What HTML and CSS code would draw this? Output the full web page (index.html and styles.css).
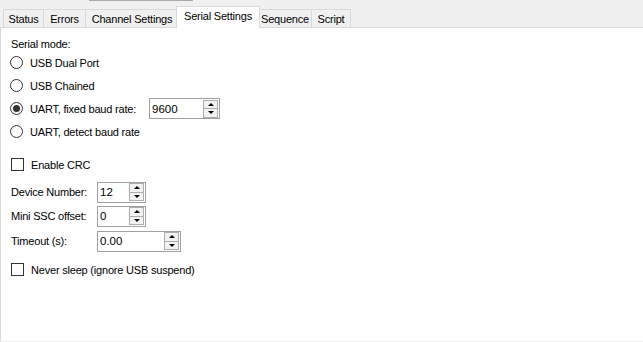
FILE: index.html
```html
<!DOCTYPE html>
<html>
<head>
<meta charset="utf-8">
<link rel="stylesheet" href="styles.css">
</head>
<body>
<div class="top"><div class="topline"></div></div>
<div class="tabs">
  <div class="tab t-status">Status</div>
  <div class="tab t-errors">Errors</div>
  <div class="tab t-channel">Channel Settings</div>
  <div class="tab sel t-serial">Serial Settings</div>
  <div class="tab t-seq">Sequence</div>
  <div class="tab t-script">Script</div>
</div>
<div class="panel">
  <div class="label-line">Serial mode:</div>
  <div class="row"><span class="radio"></span><span>USB Dual Port</span></div>
  <div class="row"><span class="radio"></span><span>USB Chained</span></div>
  <div class="row"><span class="radio on"></span><span class="uart-label">UART, fixed baud rate:</span>
    <div class="num w-baud"><span class="val">9600</span><span class="spin"><span class="btn up"></span><span class="btn down"></span></span></div>
  </div>
  <div class="row"><span class="radio"></span><span>UART, detect baud rate</span></div>

  <div class="row crc"><span class="check"></span><span>Enable CRC</span></div>

  <div class="frow first"><span class="flabel">Device Number:</span>
    <div class="num w-small"><span class="val">12</span><span class="spin"><span class="btn up"></span><span class="btn down"></span></span></div>
  </div>
  <div class="frow"><span class="flabel">Mini SSC offset:</span>
    <div class="num w-small"><span class="val">0</span><span class="spin"><span class="btn up"></span><span class="btn down"></span></span></div>
  </div>
  <div class="frow tmo"><span class="flabel">Timeout (s):</span>
    <div class="num w-wide"><span class="val">0.00</span><span class="spin"><span class="btn up"></span><span class="btn down"></span></span></div>
  </div>

  <div class="row sleep"><span class="check"></span><span>Never sleep (ignore USB suspend)</span></div>
</div>
</body>
</html>
```
FILE: styles.css
```css
html, body {
  margin: 0;
  padding: 0;
}
body {
  width: 643px;
  height: 342px;
  overflow: hidden;
  background: #f0f0f0;
  font-family: "Liberation Sans", Arial, sans-serif;
  font-size: 11px;
  letter-spacing: -0.2px;
  color: #000;
}
.top {
  height: 7px;
}
.topline {
  margin-left: 89px;
  width: 104px;
  height: 1px;
  background: #a9a9a9;
}
.tabs {
  display: flex;
  align-items: flex-end;
  height: 21px;
  padding-left: 3px;
  position: relative;
  z-index: 1;
  margin-bottom: -1px;
}
.tab {
  box-sizing: border-box;
  height: 18px;
  margin-bottom: 1px;
  border: 1px solid #d9d9d9;
  border-bottom: none;
  margin-right: -1px;
  background: #f0f0f0;
  display: flex;
  align-items: center;
  justify-content: center;
  padding-top: 1px;
}
.t-status { width: 41px; }
.t-errors { width: 43px; }
.t-channel { width: 94px; }
.t-serial { width: 84px; }
.t-seq { width: 54px; }
.t-script { width: 40px; }
.tab.sel {
  height: 22px;
  margin-bottom: 0;
  background: #fff;
  border-color: #d9d9d9;
  margin-left: -2px;
  margin-right: -2px;
  padding-top: 0;
  padding-bottom: 3px;
  position: relative;
  z-index: 2;
}
.panel {
  box-sizing: border-box;
  height: 314px;
  background: #fff;
  border-top: 1px solid #d9d9d9;
  border-left: 1px solid #d9d9d9;
  padding: 10px 0 0 9px;
}
.label-line {
  height: 13px;
  line-height: 13px;
  padding-left: 1px;
}
.row {
  height: 23px;
  display: flex;
  align-items: center;
}
.radio {
  box-sizing: border-box;
  width: 13px;
  height: 13px;
  border: 1px solid #333;
  border-radius: 50%;
  margin-right: 7px;
  display: flex;
  align-items: center;
  justify-content: center;
  flex: none;
}
.radio.on::after {
  content: "";
  width: 7px;
  height: 7px;
  border-radius: 50%;
  background: #333;
}
.check {
  box-sizing: border-box;
  width: 13px;
  height: 13px;
  border: 1px solid #333;
  margin-left: 1px;
  margin-right: 7px;
  flex: none;
}
.uart-label {
  width: 119px;
}
.num {
  box-sizing: border-box;
  height: 21px;
  border: 1px solid #a0a0a0;
  background: #fff;
  display: flex;
  align-items: center;
  justify-content: space-between;
  padding: 1px 1px 1px 2px;
}
.w-baud { width: 71px; }
.w-small { width: 49px; }
.w-wide { width: 84px; }
.val {
  font-size: 11.5px;
  letter-spacing: 0;
}
.spin {
  width: 15px;
  height: 18px;
  display: flex;
  flex-direction: column;
}
.btn {
  box-sizing: border-box;
  flex: 1;
  border: 1px solid #adadad;
  background: #f2f2f2;
  display: flex;
  align-items: center;
  justify-content: center;
}
.btn.down { border-top: none; }
.btn.up::after {
  content: "";
  border-left: 3px solid transparent;
  border-right: 3px solid transparent;
  border-bottom: 3px solid #000;
}
.btn.down::after {
  content: "";
  border-left: 3px solid transparent;
  border-right: 3px solid transparent;
  border-top: 3px solid #000;
}
.crc {
  margin-top: 10px;
}
.frow {
  height: 24px;
  display: flex;
  align-items: center;
  padding-left: 1px;
}
.frow.first { margin-top: 4px; }
.frow.tmo { margin-top: 1px; }
.flabel {
  width: 86px;
}
.sleep {
  margin-top: 5px;
}
```
